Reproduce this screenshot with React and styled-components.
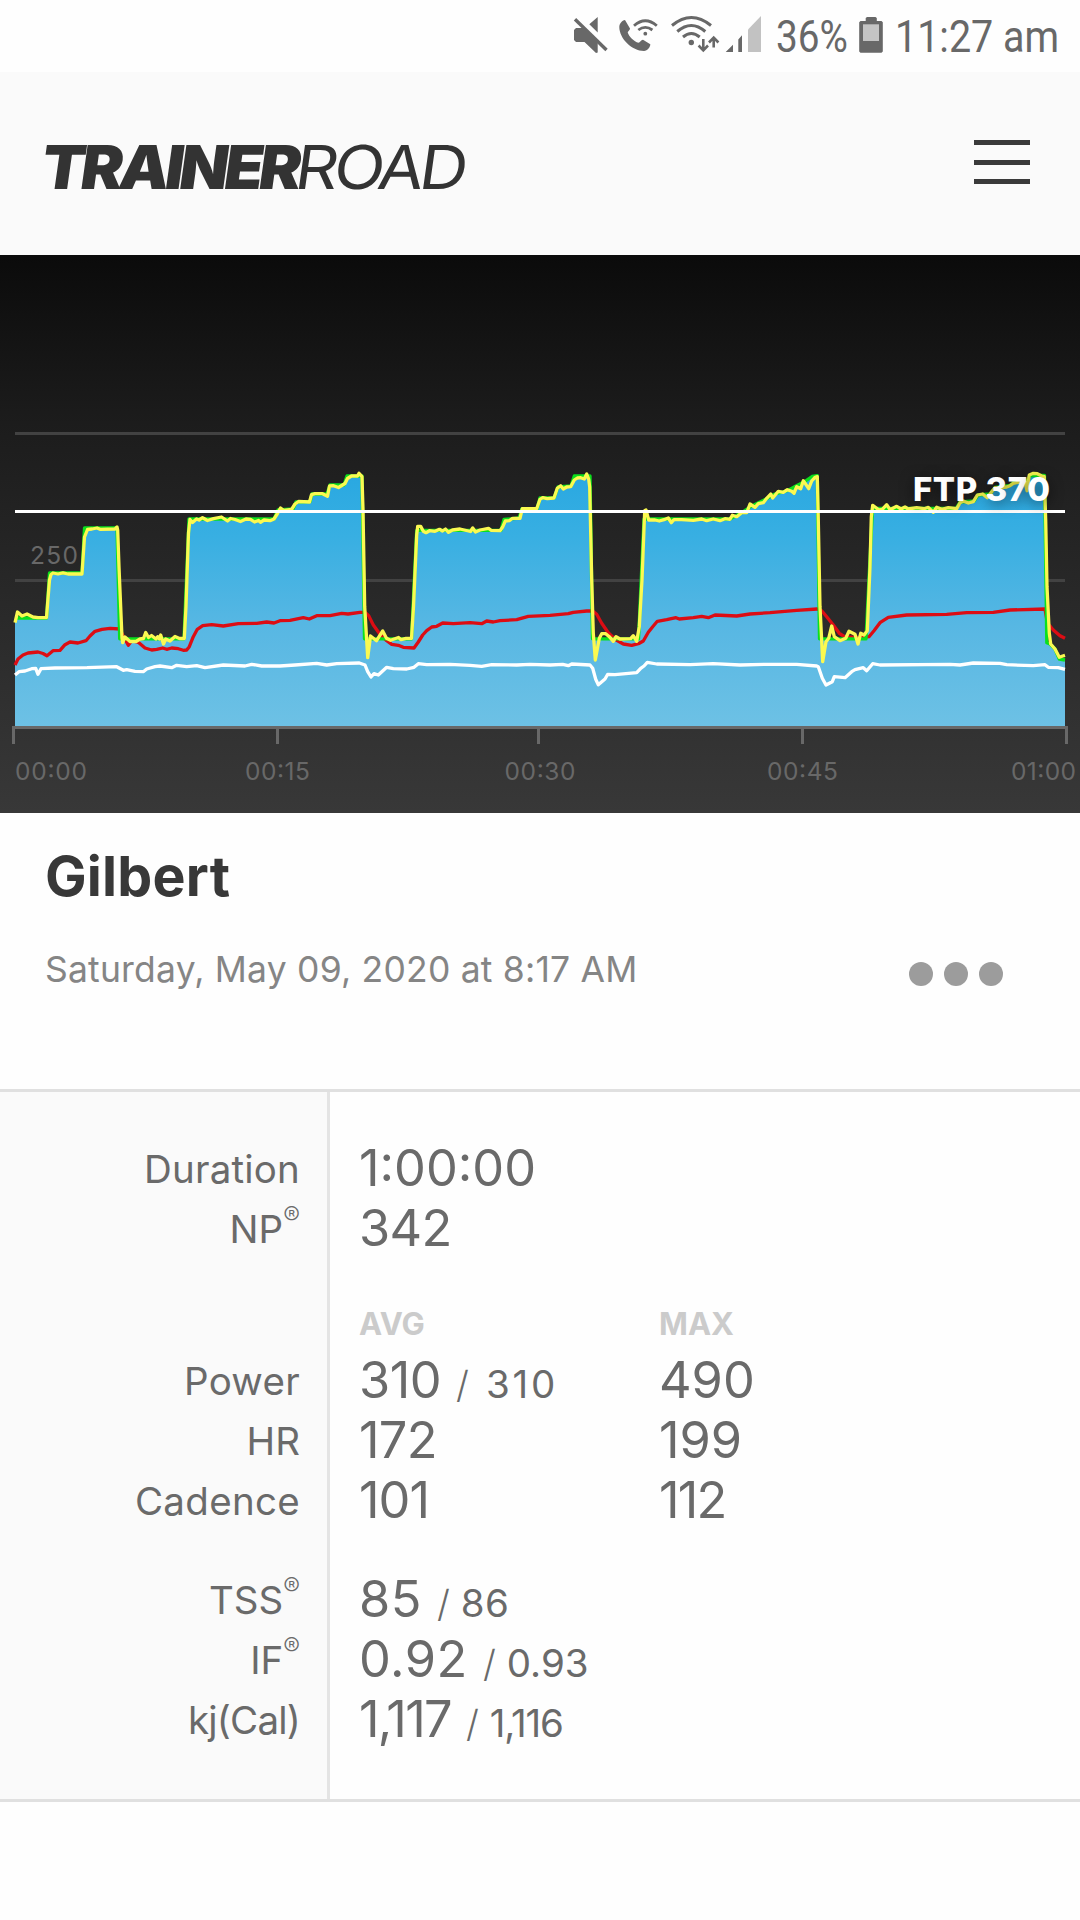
import styled, { createGlobalStyle } from "styled-components";

const GlobalStyle = createGlobalStyle`
  body {
    margin: 0;
    background: #fefefe;
    font-family: Inter, "Open Sans", sans-serif;
    color: #6a6a6a;
  }
`;

const Page = styled.div`
  width: 1080px;
  min-height: 1920px;
`;

const StatusBar = styled.div`
  display: flex;
  height: 72px;
  padding-left: 573px;
  font-family: Roboto, sans-serif;
  font-size: 45px;
  line-height: 74px;
  color: #686868;
`;

const StatusIcon = styled.svg`
  display: block;
  flex: none;
  width: ${(props) => props.$width}px;
  height: 72px;
  margin-right: ${(props) => props.$gap || 0}px;
`;

const StatusText = styled.span`
  flex: none;
  width: ${(props) => props.$width}px;
  white-space: nowrap;
  transform: scaleX(${(props) => props.$squeeze});
  transform-origin: left;
`;

const Header = styled.header`
  display: flex;
  justify-content: space-between;
  align-items: center;
  box-sizing: border-box;
  height: 183px;
  padding: 0 50px 0 30px;
  background: #fafafa;
`;

const Logo = styled.svg`
  width: 460px;
  height: 96px;
  margin-top: 7px;
  fill: #333;
`;

const MenuButton = styled.button`
  display: flex;
  flex-direction: column;
  justify-content: space-between;
  width: 56px;
  height: 44px;
  margin-bottom: 3px;
  padding: 0;
  border: none;
  background: none;
`;

const MenuLine = styled.span`
  height: 5px;
  background: #3a3a3a;
`;

const Chart = styled.svg`
  display: block;
  width: 1080px;
  height: 558px;
  background: linear-gradient(#0b0b0b, #1c1c1c 30%, #383838);
`;

const AxisText = styled.text`
  font-size: 24.5px;
  fill: #686868;
`;

const FtpText = styled.text`
  font-size: 33px;
  font-weight: 800;
  fill: #fff;
  text-shadow: 0 3px 14px rgba(0, 0, 0, 0.6);
`;

const Summary = styled.section`
  box-sizing: border-box;
  height: 276px;
  padding: 28px 77px 0 45px;
`;

const Title = styled.h1`
  margin: 0;
  font-size: 55.5px;
  line-height: 70px;
  letter-spacing: 0.2px;
  color: #383838;
`;

const SummaryRow = styled.div`
  display: flex;
  justify-content: space-between;
  align-items: center;
  margin-top: 34px;
`;

const RideDate = styled.p`
  margin: 0;
  font-size: 35.5px;
  line-height: 50px;
  letter-spacing: 0.2px;
  color: #858585;
`;

const MoreButton = styled.button`
  display: flex;
  gap: 11px;
  margin-top: 8px;
  padding: 0;
  border: none;
  background: none;
`;

const Dot = styled.span`
  width: 24px;
  height: 24px;
  border-radius: 50%;
  background: #9c9c9c;
`;

const Stats = styled.section`
  display: flex;
  height: 707px;
  border-top: 3px solid #e0e0e0;
  border-bottom: 3px solid #e0e0e0;
`;

const Labels = styled.div`
  box-sizing: border-box;
  width: 330px;
  padding: 47px 27px 0 0;
  border-right: 3px solid #e4e4e4;
  background: #fafafa;
  text-align: right;
`;

const Values = styled.div`
  flex: 1;
  padding: 46px 0 0 29px;
`;

const Label = styled.div`
  height: 60px;
  margin-top: ${(props) => props.$gap || 0}px;
  font-size: 38.5px;
  line-height: 60px;
  letter-spacing: ${(props) => props.$track || 0}px;
`;

const Registered = styled.sup`
  font-size: 25px;
  font-weight: 300;
  line-height: 0;
  vertical-align: 18px;
`;

const ValueRow = styled.div`
  display: flex;
  height: 60px;
  margin-top: ${(props) => props.$gap || 0}px;
  line-height: 60px;
`;

const Cell = styled.div`
  width: 300px;
  white-space: nowrap;
`;

const Big = styled.span`
  font-size: 50.5px;
  letter-spacing: ${(props) => props.$track || 0}px;
`;

const Small = styled.span`
  margin-left: ${(props) => props.$left || 0}px;
  font-size: 38.5px;
  letter-spacing: ${(props) => props.$track || 0}px;
`;

const Slash = styled.span`
  margin: 0 ${(props) => props.$right || 11}px 0 15px;
  font-size: 37px;
  font-weight: 300;
`;

const ColumnHead = styled(Cell)`
  font-size: 31px;
  font-weight: 700;
  color: #cbcbcb;
`;

const ACTUAL =
  "15,622.7 17.5,612 22,616 27,614 33,617 38,617.7 46.5,617.5 49.5,580 51,574.5 53,573 58,574 63,572.8 68,574 82,574 84.5,537 87.5,529.5 92,529 97,528 100,529.3 115,529 117,527 117.7,530 119,567 122,638 122.7,642.7 125,637 130,641.5 136,641.5 140,639 143.5,638.5 145.7,632.5 148.5,637.5 151.5,635.5 156,639 157.7,636.7 159.5,639 160.7,635 163.5,644 165.7,639 170,641 175,636.5 179.5,638.5 184.3,638.5 186,606.5 188.5,533 190,519.5 192.5,522.5 196.5,519 199,520 202.5,517.7 207.5,520.5 213.5,518.7 221.5,517 227.5,521 230.5,518.5 235,519.5 240.5,521.5 246,519 250.5,519.3 254.5,522 258.5,520.5 260.5,522.3 264,520 270,520.7 " +
  "274,519 277.5,513.5 280.5,508 284,510.5 291.5,509.5 295,504 298.5,501.5 309.5,502 311.5,494.7 315,493.7 322.5,493.7 327.5,496.3 329.5,486 333.5,485.7 338.5,487.5 345,483.5 347.5,478.5 351.5,476 357.5,476 359,473.3 362,476.7 363,510 364.7,606.7 367.7,657.7 370.5,636 376.5,640.7 382.7,631 386.5,638.3 390.5,640.3 398.5,637.5 401,639.7 406,638.3 411.5,638.3 413.5,606.7 416.7,535 417.7,526.3 420.7,526.3 423.3,531.3 426,532.7 429.5,530.7 435,531.3 439.5,529.3 442.5,531 445.5,529 448.5,532.3 452.5,530 460,529 468.5,531 470.5,531.5 472.7,528 475.5,532 480,530 488.5,528.3 491,530.3 500,530.7 502.5,527.3 505.3,521 509.3,520.7 512.5,518.3 520,518.3 522.3,508.7 536.7,508.7 540,499.3 " +
  "542.7,497.7 547.3,498.7 554,498 557.3,488.3 560.7,485.7 563.3,489 566.7,487 570.7,486.7 574.3,480 577.3,478 580.7,477.7 584.3,479 586.7,474 588.7,479.3 589.7,487 591.7,580 593.3,633.3 595.3,660 599.3,638.3 601.7,633.7 605.7,633.7 609.3,636.7 613.3,641.3 616,636.7 620,639 630.7,638.7 633.3,635.7 636.7,641.3 639.3,626.7 642,580 644.7,510.7 646,510 648.7,520 655,520 659.3,521 664,519.7 668.3,518 671.3,522.7 674,519.7 681.7,519.7 693.3,520.3 701.7,519 706.7,520.7 713.3,519 720,520.7 725,518.7 730,519.3 732.3,515.3 736.7,516.7 741.7,512.7 746.7,512.7 750,504 755,507.3 758.3,503.7 763.3,502.7 766.7,498.3 770.7,494 772.7,498 778.3,491.3 783.3,492.3 787.3,489.7 791.7,491.3 794,493.3 796.7,486.7 800.7,488.7 803.3,480.7 808.7,488.7 811.7,481 815,477.3 817.3,476.7 " +
  "818.3,520 820,606.7 822.7,661.7 826,641.7 828.7,638.3 831.7,626 834.3,636.7 840,640.7 845.7,638.3 849,631.3 855,634.3 858,644 860.7,633.3 864,635 867.3,630.7 870,566.7 871.3,516.7 872.7,505.3 876.7,508.3 879,510 882.3,509.3 886.7,504.7 890,509.7 896.7,506.3 901,509 905,507 908.3,509 916.7,507.7 924,508.7 928.3,507.3 933.3,512.3 936.7,507.3 941.7,509.3 948.3,507.7 956.7,508.7 960,502.7 963.3,501 968.3,503 973.3,501.7 977.3,495 982.7,494 987.3,497.7 991.7,491.7 995,487.7 1001.7,487.7 1006.7,487 1010,485.7 1013.3,483.3 1018.3,482.3 1025,481.7 1027,490.7 1029.3,475 1033.3,473.3 1037.3,473.7 1041.7,476 1044.3,476.7 1045.7,520 1047,586.7 1049.3,633.3 1050.7,644 1055,649 1059.3,657.3 1062.7,656 1065,655.3";

const TARGET =
  "15,618 46.5,618 49.5,573 82,573 84.5,528 117,528 119.7,638.8 184,638.8 189,519 274,519 278,510 293,509 296,502 310,501.5 312,494 327,494 330,485 344,485 347,476 362,476 364.5,638.8 411.5,638.8 416.7,530.3 501,530.3 504,519.5 519,518 522,508.7 537,508.7 540,498 554,498 558,487 571,486 574.3,476 590,476 592.5,638.8 638.5,638.8 644,519 730,519 742,512.5 750,507 758,503 766,499 775,494 788,490.5 796,486 804,482 812,476.5 817.3,475.7 819.5,638.8 866,638.8 872.5,508.5 956,508.5 960,502 974,501 978,495 990,494 995,487.5 1010,485.5 1014,482 1027,481 1030,475.5 1044.5,475.5 1046.8,642.7 1050,644 1055,649 1059.3,659 1065,660";

const HEART_RATE =
  "15,665 18,659 23,655 28,653 38,652 43,653.5 47,655.7 53,650.7 60,650.3 65,644.7 70,642 78,643 86,640.7 90,636 95,631.3 102,629.3 110,628.3 120,629 122.7,635 128.3,645.3 131.7,640.7 138.3,642.3 145,648 151.7,650 156.7,649.3 162.7,648 166.7,649.3 171.7,648 178.3,648.7 183.3,650.3 186.7,650 189.3,646.7 193.3,636.7 197.3,629.3 202.7,625.7 211.7,624.7 223.3,626 238.3,623.7 256.7,623.3 266.7,622 274,623 280,620.7 290,620.3 303.3,617.7 309.3,619 316.7,615.7 330,615.7 341.7,613.3 348,614 360,612.3 365,612.3 368.7,615.7 373.3,625 380,634.3 386.7,640.7 391.7,644.3 398.3,645.3 403.3,647.3 414,648 418.3,642 422.7,635 426.7,630.7 431.7,627 436.7,626.3 442.7,623 453.3,623.7 470,622.7 481.7,623.7 486.7,621 493.3,622 500,620.7 516.7,619.7 528.3,616.3 550,615.3 568.3,613.7 573.3,612.3 586.7,611 592.7,611 596.7,614.3 601.7,623.3 608.3,632.7 615,639.3 623.3,644 631.7,645.3 639.3,643.3 643.3,641 648.3,632.3 652.7,626.7 657.3,621.3 666.7,619.7 676,617.7 679.3,619 693.3,617.7 701.7,616.3 708.3,617.7 715,615 736.7,616 750,614 770,612.7 796.7,610.3 817,609 821.7,610.7 826.7,616.7 833.3,625 839.3,633.3 845,637 860,637.7 869,636.7 874,630.7 880,622.7 888.3,617.3 906.7,615 946.7,614.3 966.7,612.7 993.3,612.3 1010,610 1045,609 1047.3,622.7 1053.3,630 1060,635.7 1065,638.3";

const CADENCE =
  "15,675 19,671.7 25,671 31.7,668.7 35.7,668.3 38,674.3 41,668.7 55,668 87,667.7 116.7,666.7 123.3,670.3 126.7,669.7 135,671.3 143.3,671.7 146.7,669 155,666.7 160,666 171.7,667.7 176.7,665.3 186.7,666.7 196.7,665.7 205,667.7 223.3,665 245,666 251.7,664.3 261.7,666 280,666 295,665 316.7,663.3 326.7,665 336.7,663.7 359.3,663 365,665 367.7,671.7 371,677 374,673.7 378.3,675 386.7,667.3 393.3,668.7 406.7,669 414,667.3 418.3,663.7 426.7,664.7 450,664.3 470,665.3 481.7,666.3 491.7,664.7 516.7,665 530,664.3 550,665 562.7,664.3 568.3,665.7 571.7,664 590,665 592.7,668.3 595.7,679.3 598.3,684.7 605,679 607.7,674.3 615,674.7 636.7,672.7 640.7,668.3 644,666 647.3,662.3 656.7,664 690,664.7 713.3,663.7 740,665 766.7,664.3 796.7,664.3 816.7,666 818.3,666.7 822.3,678.3 826,685 832.3,681.7 834.3,676.7 845,677.7 851.7,671.7 855,669.7 863.3,667.7 866.7,670.7 872.7,663.7 880,665 950,664.3 960,665 973.3,663 1000,663.3 1006.7,664.7 1033.3,665.7 1045,664.7 1048.3,667.3 1058.3,667.7 1065,669.3";

// [label, text x, text width, tick x]
const TICKS = [
  ["00:00", 15, 72, 13.5],
  ["00:15", 245, 65, 277.5],
  ["00:30", 504.5, 71, 538.5],
  ["00:45", 767, 71, 802.5],
  ["01:00", 1011, 65, 1066.5],
];

const StatusIcons = () => (
  <>
    <StatusIcon $width={46} viewBox="573 0 46 72" fill="currentColor">
      <path d="M589.3 24.3 597.7 17V32.5ZM576 28H583L597.7 42V52.5L596 53 584.5 42H576L574 40V30Z" />
      <path d="M575 19.3 606.5 50" stroke="currentColor" strokeWidth="3.4" />
    </StatusIcon>
    <StatusIcon $width={50} viewBox="619 0 50 72" fill="none">
      <path
        d="M619.3 27C619.3 24 622 20.3 625 20.1L630 28.5C630.2 30 628 31 627.7 32.4 629 36.5 634 41.3 638.5 42.8 640 42.6 641 39.7 643 39.8L650.3 44.2C650.5 46.5 647.5 51 644 51 632 51 619.3 38.5 619.3 27Z"
        fill="currentColor"
      />
      <circle cx="645.3" cy="33.7" r="1.9" fill="currentColor" />
      <path
        d="M634 25.7Q645.3 15.8 656.8 25.7M638.3 30Q645.3 24.8 652.4 30"
        stroke="currentColor"
        strokeWidth="2.8"
      />
    </StatusIcon>
    <StatusIcon $width={56} viewBox="669 0 56 72" fill="none" stroke="currentColor">
      <path
        d="M672 25.5Q691.3 9.5 711 25.5M677.3 31.5Q691.3 19.5 705.3 31.5M683 37Q691.3 30 699.7 37"
        strokeWidth="3"
      />
      <circle cx="691.3" cy="42.5" r="2.7" fill="currentColor" stroke="none" />
      <path
        d="M703.3 39V50M698.6 45.5 703.3 50.3 708 45.5M713.7 47.5V38M709 42.5 713.7 37.7 718.4 42.5"
        strokeWidth="2.6"
      />
    </StatusIcon>
    <StatusIcon $width={51} viewBox="725 0 51 72" fill="currentColor">
      <path d="M725.7 52 733 44.7V52ZM738.3 52V39.5L742 35.3V52Z" />
      <path d="M748 52V29.5L761 16V52Z" fill="#c2c2c2" />
    </StatusIcon>
  </>
);

const RideChart = () => (
  <Chart viewBox="0 255 1080 558">
    <defs>
      <linearGradient id="power" gradientUnits="userSpaceOnUse" x1="0" y1="474" x2="0" y2="726">
        <stop offset="0" stopColor="#29a8e1" />
        <stop offset="0.25" stopColor="#38afe2" />
        <stop offset="0.6" stopColor="#57b7e3" />
        <stop offset="1" stopColor="#6dc1e5" />
      </linearGradient>
    </defs>
    <g stroke="#424242" strokeWidth="3">
      <path d="M15 433.5H1065M15 580.5H1065" />
    </g>
    <AxisText x="30" y="564" textLength="48">
      250
    </AxisText>
    <polygon points={`15,726 ${TARGET} 1065,726`} fill="url(#power)" />
    <g fill="none" strokeWidth="3.3" strokeLinejoin="round">
      <polyline points={HEART_RATE} stroke="#dc0d14" />
      <polyline points={CADENCE} stroke="#fff" />
      <polyline points={TARGET} stroke="#0be01c" />
      <polyline points={ACTUAL} stroke="#fbf951" />
      <path d="M15 511.5H1065" stroke="#fff" strokeWidth="3" />
    </g>
    <FtpText x="913" y="500.5" textLength="137">
      FTP 370
    </FtpText>
    <path d="M12 727.5H1068" stroke="#686868" strokeWidth="3" />
    {TICKS.map(([label, x, width, tick]) => (
      <g key={label}>
        <path d={`M${tick} 726V744`} stroke="#686868" strokeWidth="3" />
        <AxisText x={x} y="779.7" textLength={width}>
          {label}
        </AxisText>
      </g>
    ))}
  </Chart>
);

const App = () => {
  return (
    <Page>
      <GlobalStyle />
      <StatusBar>
        <StatusIcons />
        <StatusText $width={83} $squeeze={0.86}>
          36%
        </StatusText>
        <StatusIcon $width={24} $gap={12} viewBox="859 0 24 72" fill="currentColor">
          <path d="M865.7 21V18L867 17H875.5L876.8 18V21H881.5L882.8 22.3V51.5L881.5 52.8H860.5L859.2 51.5V22.3L860.5 21Z" />
          <path d="M863 24.3H879V41H863Z" fill="#c4c4c4" />
        </StatusIcon>
        <StatusText $width={170} $squeeze={0.877}>
          11:27 am
        </StatusText>
      </StatusBar>
      <Header>
        <Logo viewBox="30 119 460 96">
          <g transform="translate(0 189) skewX(-8)" fontSize="60.5">
            <text
              x="39"
              y="0"
              fontWeight="900"
              letterSpacing="-4"
              textLength="256"
              lengthAdjust="spacingAndGlyphs"
            >
              TRAINER
            </text>
            <text
              x="293"
              y="0"
              fontWeight="400"
              letterSpacing="-4"
              textLength="168"
              lengthAdjust="spacingAndGlyphs"
            >
              ROAD
            </text>
          </g>
        </Logo>
        <MenuButton aria-label="Menu">
          <MenuLine />
          <MenuLine />
          <MenuLine />
        </MenuButton>
      </Header>
      <RideChart />
      <Summary>
        <Title>Gilbert</Title>
        <SummaryRow>
          <RideDate>Saturday, May 09, 2020 at 8:17 AM</RideDate>
          <MoreButton aria-label="More">
            <Dot />
            <Dot />
            <Dot />
          </MoreButton>
        </SummaryRow>
      </Summary>
      <Stats>
        <Labels>
          <Label $track={0.2}>Duration</Label>
          <Label>
            NP<Registered>®</Registered>
          </Label>
          <Label $gap={92} $track={0.3}>
            Power
          </Label>
          <Label>HR</Label>
          <Label $track={0.3}>Cadence</Label>
          <Label $gap={39}>
            TSS<Registered>®</Registered>
          </Label>
          <Label>
            IF<Registered>®</Registered>
          </Label>
          <Label $track={-0.8}>kj(Cal)</Label>
        </Labels>
        <Values>
          <ValueRow>
            <Cell>
              <Big>1:00:00</Big>
            </Cell>
          </ValueRow>
          <ValueRow>
            <Cell>
              <Big $track={-0.7}>342</Big>
            </Cell>
          </ValueRow>
          <ValueRow $gap={36}>
            <ColumnHead>AVG</ColumnHead>
            <ColumnHead>MAX</ColumnHead>
          </ValueRow>
          <ValueRow $gap={-4}>
            <Cell>
              <Big $track={-0.5}>310</Big>
              <Slash $right={17}>/</Slash>
              <Small $track={2.8}>310</Small>
            </Cell>
            <Cell>
              <Big>490</Big>
            </Cell>
          </ValueRow>
          <ValueRow>
            <Cell>
              <Big $track={-0.7}>172</Big>
            </Cell>
            <Cell>
              <Big>199</Big>
            </Cell>
          </ValueRow>
          <ValueRow>
            <Cell>
              <Big $track={-1}>101</Big>
            </Cell>
            <Cell>
              <Big $track={-1.8}>112</Big>
            </Cell>
          </ValueRow>
          <ValueRow $gap={39}>
            <Cell>
              <Big $track={0.5}>85</Big>
              <Slash>/</Slash>
              <Small $track={0.3}>86</Small>
            </Cell>
          </ValueRow>
          <ValueRow>
            <Cell>
              <Big $track={0.5}>0.92</Big>
              <Slash>/</Slash>
              <Small>0.93</Small>
            </Cell>
          </ValueRow>
          <ValueRow>
            <Cell>
              <Big $track={-1.7}>1,117</Big>
              <Slash>/</Slash>
              <Small $track={-1.1}>1,116</Small>
            </Cell>
          </ValueRow>
        </Values>
      </Stats>
    </Page>
  );
};

export default App;
